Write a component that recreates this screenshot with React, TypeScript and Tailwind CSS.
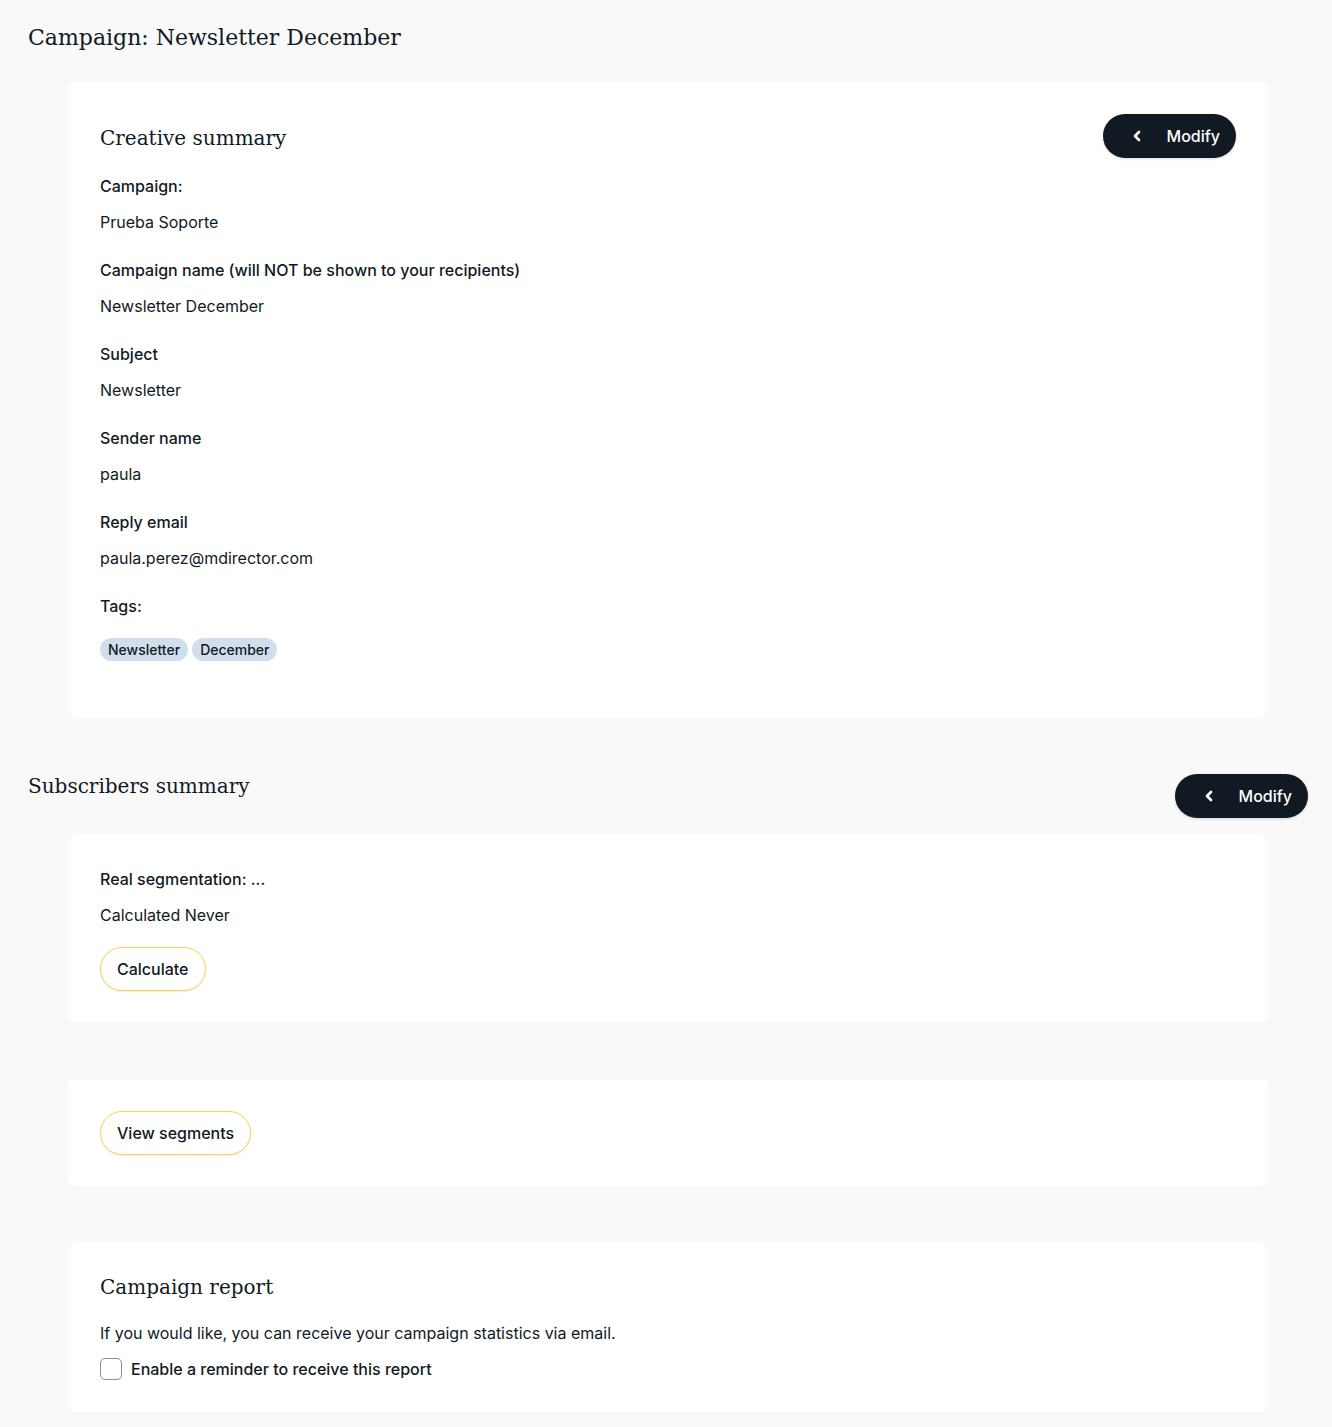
import { ChevronLeft } from 'lucide-react';

const serif = "font-['DejaVu_Serif',serif]";

function ModifyButton() {
  return (
    <button className="flex h-11 items-center gap-[22px] rounded-full bg-[#111a22] pl-[26px] pr-4 text-base font-medium text-white shadow-[0_1px_3px_rgba(0,0,0,0.15)]">
      <ChevronLeft size={16} strokeWidth={4} />
      Modify
    </button>
  );
}

function OutlineButton({ label }: { label: string }) {
  return (
    <button className="h-11 rounded-full border border-[#f7d44c] bg-white px-4 text-base font-medium text-[#111a22] shadow-[0_1px_2px_rgba(0,0,0,0.08)]">
      {label}
    </button>
  );
}

function Field({ label, value }: { label: string; value: string }) {
  return (
    <div className="mb-6">
      <div className="leading-6 font-medium">{label}</div>
      <div className="mt-3 leading-6">{value}</div>
    </div>
  );
}

export default function App() {
  const fields = [
    { label: 'Campaign:', value: 'Prueba Soporte' },
    { label: 'Campaign name (will NOT be shown to your recipients)', value: 'Newsletter December' },
    { label: 'Subject', value: 'Newsletter' },
    { label: 'Sender name', value: 'paula' },
    { label: 'Reply email', value: 'paula.perez@mdirector.com' },
  ];

  return (
    <div className="min-h-[1427px] bg-[#f9f9f9] pl-7 pr-6 pt-[20px] pb-4 font-['Inter',sans-serif] text-base text-[#111a22]">
      <h1 className={`${serif} text-[22px] leading-9`}>Campaign: Newsletter December</h1>

      {/* creative summary */}
      <section className="ml-10 mr-[40px] mt-[26px] rounded-lg bg-white px-8 pt-8 pb-[56px]">
        <div className="flex items-center justify-between">
          <h2 className={`${serif} mt-[4px] text-[20px]`}>Creative summary</h2>
          <ModifyButton />
        </div>
        <div className="mt-4">
          {fields.map((f) => (
            <Field key={f.label} label={f.label} value={f.value} />
          ))}
          <div className="leading-6 font-medium">Tags:</div>
          <div className="mt-[20px] flex gap-1">
            {['Newsletter', 'December'].map((t) => (
              <span key={t} className="rounded-full bg-[#d1dfed] px-2 py-[2px] text-sm leading-[19px] font-medium">
                {t}
              </span>
            ))}
          </div>
        </div>
      </section>

      {/* subscribers summary */}
      <div className="mt-[57px] flex items-center justify-between">
        <h2 className={`${serif} -mt-[20px] text-[20px]`}>Subscribers summary</h2>
        <ModifyButton />
      </div>

      <section className="ml-10 mr-[40px] mt-[17px] rounded-lg bg-white px-8 pt-8 pb-[31px]">
        <div className="leading-6 font-medium">Real segmentation: ...</div>
        <div className="mt-3 leading-6">Calculated Never</div>
        <div className="mt-[20px]">
          <OutlineButton label="Calculate" />
        </div>
      </section>

      <section className="ml-10 mr-[40px] mt-[57px] rounded-lg bg-white px-8 pt-8 pb-[31px]">
        <OutlineButton label="View segments" />
      </section>

      {/* campaign report */}
      <section className="ml-10 mr-[40px] mt-[57px] rounded-lg bg-white px-8 pt-[33px] pb-[31px]">
        <h2 className={`${serif} text-[20px] leading-[22px]`}>Campaign report</h2>
        <p className="mt-[23px] leading-6">If you would like, you can receive your campaign statistics via email.</p>
        <label className="mt-3 flex items-center gap-[9px] font-medium">
          <span className="h-[22px] w-[22px] rounded-[5px] border border-[#8a8f94] bg-white" />
          Enable a reminder to receive this report
        </label>
      </section>
    </div>
  );
}
